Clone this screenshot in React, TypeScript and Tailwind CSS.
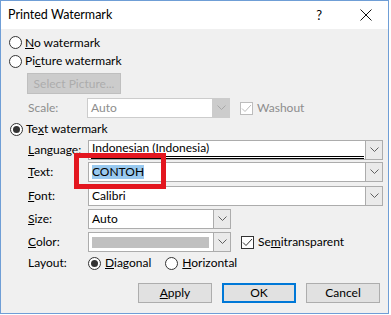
import React from 'react'

const font = { fontFamily: '"Segoe UI", Lato, "Noto Sans", sans-serif' }

function Chevron({ color = '#606060' }: { color?: string }) {
  return (
    <svg width="9" height="6" viewBox="0 0 9 6">
      <polyline points="0.5,0.5 4.5,4.5 8.5,0.5" fill="none" stroke={color} strokeWidth="1" />
    </svg>
  )
}

function Radio({ checked = false }: { checked?: boolean }) {
  return (
    <span className="flex h-[13px] w-[13px] shrink-0 items-center justify-center rounded-full border border-[#333] bg-white">
      {checked && <span className="h-[7px] w-[7px] rounded-full bg-[#333]" />}
    </span>
  )
}

function Check({ disabled = false }: { disabled?: boolean }) {
  const c = disabled ? '#bcbcbc' : '#333'
  return (
    <span
      className={`flex h-[13px] w-[13px] shrink-0 items-center justify-center border bg-white ${disabled ? 'border-[#bcbcbc]' : 'border-[#333]'}`}
    >
      <svg width="11" height="9" viewBox="0 0 11 9">
        <polyline points="1,4.5 4,7.5 10,1" fill="none" stroke={c} strokeWidth="1" />
      </svg>
    </span>
  )
}

function Combo({
  width,
  children,
  disabled = false,
}: {
  width: string
  children?: React.ReactNode
  disabled?: boolean
}) {
  return (
    <div
      className={`flex h-[20px] ${width} border ${disabled ? 'border-[#cccccc]' : 'border-[#acacac]'} bg-white`}
    >
      <div className="relative flex flex-1 items-center overflow-hidden pl-[3px]">{children}</div>
      <div
        className={`flex w-[17px] items-center justify-center border-l ${disabled ? 'border-[#cccccc] bg-[#cccccc]' : 'border-[#acacac] bg-[#eaeaea]'}`}
      >
        <Chevron color={disabled ? '#a8a8a8' : '#606060'} />
      </div>
    </div>
  )
}

function Row({ label, children, mt }: { label: React.ReactNode; children: React.ReactNode; mt: string }) {
  return (
    <div className={`flex items-center pl-[27px] ${mt}`}>
      <div className="w-[60px] shrink-0">{label}</div>
      {children}
    </div>
  )
}

export default function App() {
  return (
    <div className="h-[315px] w-[391px] bg-white text-[12px] leading-none text-black" style={font}>
      <div className="relative flex h-[314px] w-[389px] flex-col border border-[#6f9ed6] bg-[#f0f0f0]">
        {/* title bar */}
        <div className="flex h-[28px] shrink-0 items-center bg-white pl-[7px]">
          <span className="flex-1 text-[12.5px]">Printed Watermark</span>
          <span className="mr-[38px] text-[13px]">?</span>
          <svg width="12" height="12" viewBox="0 0 12 12" className="mr-[16px]">
            <path d="M0.5 0.5 L11.5 11.5 M11.5 0.5 L0.5 11.5" stroke="#111" strokeWidth="1" />
          </svg>
        </div>

        <div className="flex h-[19px] items-center gap-[3px] pl-[8px] mt-[4px]">
          <Radio />
          <span>
            <u>N</u>o watermark
          </span>
        </div>
        <div className="flex h-[18px] items-center gap-[3px] pl-[8px]">
          <Radio />
          <span>
            Pi<u>c</u>ture watermark
          </span>
        </div>
        <div className="mt-[3px] pl-[26px]">
          <div className="flex h-[21px] w-[94px] items-center justify-center border border-[#bfbfbf] bg-[#cccccc] text-[#acacac]">
            Select Picture...
          </div>
        </div>

        <div className="mt-[4px] flex items-center pl-[27px] text-[#8d8d8d]">
          <div className="w-[59px] shrink-0">Scale:</div>
          <Combo width="w-[143px]" disabled>
            <span className="text-[#8d8d8d]">Auto</span>
          </Combo>
          <div className="ml-[10px] flex items-center gap-[4px]">
            <Check disabled />
            <span>Washout</span>
          </div>
        </div>

        <div className="mt-[2px] flex h-[18px] items-center gap-[3px] pl-[9px]">
          <Radio checked />
          <span>
            Te<u>x</u>t watermark
          </span>
        </div>

        <Row mt="mt-[2px]" label={<><u>L</u>anguage:</>}>
          <Combo width="w-[295px]">
            <span className="-mt-[5px]">Indonesian (Indonesia)</span>
            <span className="absolute bottom-[2px] left-[2px] right-[1px] h-[1px] bg-black" />
            <span className="absolute bottom-[0px] left-[2px] right-[1px] h-[1px] bg-black" />
          </Combo>
        </Row>
        <Row mt="mt-[2px]" label={<><u>T</u>ext:</>}>
          <Combo width="w-[295px]">
            <span className="bg-[#99c9ef] py-[1px]">CONTOH</span>
          </Combo>
        </Row>
        <Row mt="mt-[4px]" label={<><u>F</u>ont:</>}>
          <Combo width="w-[295px]">
            <span>Calibri</span>
          </Combo>
        </Row>
        <Row mt="mt-[3px]" label={<><u>S</u>ize:</>}>
          <Combo width="w-[143px]">
            <span>Auto</span>
          </Combo>
        </Row>
        <Row mt="mt-[3px]" label={<><u>C</u>olor:</>}>
          <Combo width="w-[143px]">
            <span className="h-[11px] w-[117px] bg-[#c0c0c0]" />
          </Combo>
          <div className="ml-[10px] flex items-center gap-[4px]">
            <Check />
            <span>
              Se<u>m</u>itransparent
            </span>
          </div>
        </Row>
        <Row mt="mt-[2px]" label="Layout:">
          <div className="flex h-[18px] items-center">
            <Radio checked />
            <span className="ml-[4px]">
              <u>D</u>iagonal
            </span>
            <span className="ml-[14px]">
              <Radio />
            </span>
            <span className="ml-[4px]">
              <u>H</u>orizontal
            </span>
          </div>
        </Row>

        <div className="mt-[11px] flex justify-end gap-[10px] pr-[8px]">
          <div className="flex h-[20px] w-[74px] items-center justify-center border border-[#adadad] bg-[#e1e1e1]">
            <span>
              <u>A</u>pply
            </span>
          </div>
          <div className="flex h-[20px] w-[74px] items-center justify-center border-2 border-[#0078d7] bg-[#e1e1e1]">
            OK
          </div>
          <div className="flex h-[20px] w-[74px] items-center justify-center border border-[#adadad] bg-[#e1e1e1]">
            Cancel
          </div>
        </div>

        {/* red highlight box drawn over the dialog */}
        <div className="absolute left-[73px] top-[152px] h-[36px] w-[92px] border-[5px] border-[#e3161f]" />
      </div>
    </div>
  )
}
